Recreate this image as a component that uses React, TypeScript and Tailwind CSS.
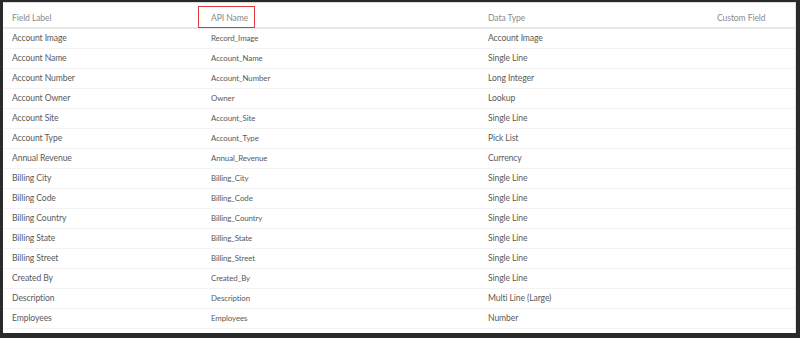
const rows = [
  ["Account Image", "Record_Image", "Account Image"],
  ["Account Name", "Account_Name", "Single Line"],
  ["Account Number", "Account_Number", "Long Integer"],
  ["Account Owner", "Owner", "Lookup"],
  ["Account Site", "Account_Site", "Single Line"],
  ["Account Type", "Account_Type", "Pick List"],
  ["Annual Revenue", "Annual_Revenue", "Currency"],
  ["Billing City", "Billing_City", "Single Line"],
  ["Billing Code", "Billing_Code", "Single Line"],
  ["Billing Country", "Billing_Country", "Single Line"],
  ["Billing State", "Billing_State", "Single Line"],
  ["Billing Street", "Billing_Street", "Single Line"],
  ["Created By", "Created_By", "Single Line"],
  ["Description", "Description", "Multi Line (Large)"],
  ["Employees", "Employees", "Number"],
]

export default function App() {
  return (
    <div
      className="w-[800px] h-[338px] bg-[#2a2a2a] pt-[2px] pl-[3px] pr-[4px] pb-[5px] overflow-hidden"
      style={{ fontFamily: "Lato, 'Open Sans', sans-serif" }}
    >
      <div className="h-full bg-white border-t border-[#dcdcdc] border-r border-r-[#e2e2e2] overflow-hidden">
        {/* header */}
        <div className="grid grid-cols-[199px_277px_229px_1fr] pl-[9px] h-[26px] border-b-2 border-[#e8e8e8] text-[8.6px] tracking-[-0.1px] text-[#8c8c8c]">
          <div className="pt-[9px] leading-[12px]">Field Label</div>
          <div className="relative">
            <span className="absolute left-[-13px] top-[3px] h-[22px] w-[57px] border border-[#e0393e] pl-[12px] pt-[5px] leading-[12px] whitespace-nowrap">
              API Name
            </span>
          </div>
          <div className="pt-[9px] leading-[12px]">Data Type</div>
          <div className="pt-[9px] leading-[12px]">Custom Field</div>
        </div>

        {rows.map(([label, api, type]) => (
          <div
            key={label}
            className="grid grid-cols-[199px_277px_229px_1fr] pl-[9px] h-[20px] items-center border-b border-[#f3f3f3] text-[#5a5a5a] tracking-[-0.1px]"
          >
            <div className="text-[8.6px]">{label}</div>
            <div className="text-[7.9px]">{api}</div>
            <div className="text-[8.6px]">{type}</div>
            <div />
          </div>
        ))}
      </div>
    </div>
  )
}
